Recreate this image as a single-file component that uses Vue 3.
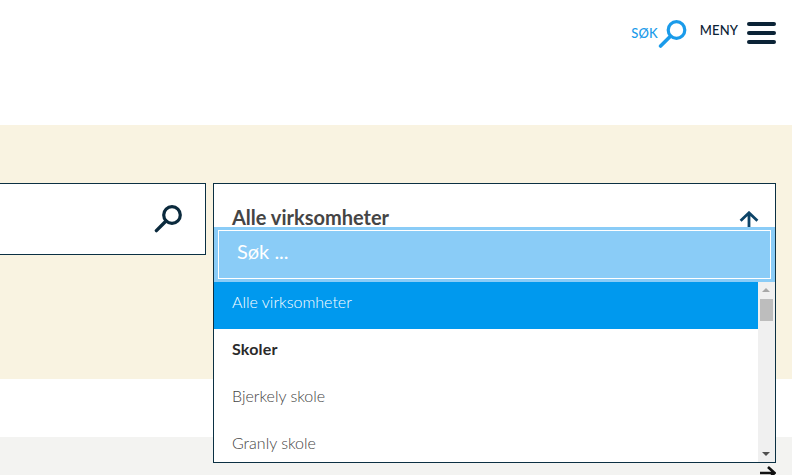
<template>
  <div class="page">
    <header class="top">
      <a class="search-link">
        <span>SØK</span>
        <svg class="search-icon" viewBox="0 0 29 28" width="29" height="28">
          <circle cx="18.5" cy="10" r="8.3" fill="none" stroke="#1a9bea" stroke-width="3.2" />
          <path d="M12.4 16.2 L2.6 26" stroke="#1a9bea" stroke-width="3.6" stroke-linecap="round" />
        </svg>
      </a>
      <a class="menu-link">
        <span>MENY</span>
        <span class="burger"><i></i><i></i><i></i></span>
      </a>
    </header>

    <section class="filters">
      <div class="text-field">
        <svg viewBox="0 0 28 28" width="28" height="28">
          <circle cx="18" cy="10" r="8.3" fill="none" stroke="#0b2a3d" stroke-width="3.2" />
          <path d="M12 16 L2.4 25.6" stroke="#0b2a3d" stroke-width="3.4" stroke-linecap="round" />
        </svg>
      </div>
      <div class="select">
        <div class="select-head">
          <span class="select-value">Alle virksomheter</span>
          <svg class="arrow-up" viewBox="0 0 20 17" width="20" height="17">
            <path d="M10 17 V2 M1.6 9.8 L10 1.8 L18.4 9.8" fill="none" stroke="#0d4468" stroke-width="2.8" />
          </svg>
        </div>
        <div class="dropdown">
          <div class="search-wrap">
            <div class="search-input">Søk ...</div>
          </div>
          <div class="list-wrap">
            <ul class="list">
              <li v-for="o in options" :key="o.label" :class="o.kind">{{ o.label }}</li>
            </ul>
            <div class="scrollbar">
              <span class="tri up"></span>
              <span class="thumb"></span>
              <span class="tri down"></span>
            </div>
          </div>
        </div>
      </div>
    </section>

    <div class="gap"></div>

    <section class="bottom">
      <svg class="arrow-right" viewBox="0 0 16 14" width="16" height="14">
        <path d="M0 7 H14 M8 1 L14.5 7 L8 13" fill="none" stroke="#111" stroke-width="2.6" />
      </svg>
    </section>
  </div>
</template>

<script setup>
const options = [
  { label: 'Alle virksomheter', kind: 'active' },
  { label: 'Skoler', kind: 'group' },
  { label: 'Bjerkely skole', kind: 'item' },
  { label: 'Granly skole', kind: 'item' },
]
</script>

<style>
html, body { margin: 0; background: #fff; overflow: hidden; }
</style>

<style scoped>
.page {
  width: 792px;
  height: 475px;
  overflow: hidden;
  font-family: Lato, "Noto Sans", sans-serif;
  background: #fff;
}
.top {
  height: 125px;
  box-sizing: border-box;
  padding: 18px 16px 0 0;
  display: flex;
  justify-content: flex-end;
  align-items: flex-start;
  gap: 13px;
}
.search-link {
  display: flex;
  align-items: center;
  gap: 0;
  color: #1a9bea;
  font-size: 13px;
  font-weight: 500;
  letter-spacing: 0.1px;
}
.search-icon { display: block; margin-top: 2px; }
.menu-link {
  display: flex;
  align-items: flex-start;
  gap: 9px;
  color: #0b2336;
  font-size: 13px;
  font-weight: 500;
  letter-spacing: 0.1px;
  line-height: 24px;
}
.burger {
  display: flex;
  flex-direction: column;
  gap: 5px;
  margin-top: 4px;
  width: 29px;
}
.burger i {
  display: block;
  height: 4px;
  border-radius: 2px;
  background: #0b2336;
}
.filters {
  height: 254px;
  box-sizing: border-box;
  background: #f9f3e1;
  padding-top: 58px;
  display: flex;
  gap: 7px;
}
.text-field {
  width: 206px;
  height: 72px;
  box-sizing: border-box;
  background: #fff;
  border: 1px solid #0b3043;
  border-left: 0;
  display: flex;
  align-items: center;
  justify-content: flex-end;
  padding: 0 23px 0 0;
}
.select {
  position: relative;
  width: 563px;
  height: 72px;
  box-sizing: border-box;
  background: #fff;
  border: 1px solid #0b3043;
}
.select-head {
  display: flex;
  justify-content: space-between;
  padding: 21px 16px 0 18px;
}
.select-value {
  font-size: 20px;
  font-weight: 700;
  line-height: 24px;
  color: #454545;
}
.arrow-up { margin-top: 6px; }
.dropdown {
  position: absolute;
  top: 43px;
  left: -1px;
  right: -1px;
  height: 236px;
  box-sizing: border-box;
  border: 1px solid #0b3043;
  border-top: 0;
  background: #fff;
  z-index: 2;
  display: flex;
  flex-direction: column;
}
.search-wrap {
  height: 55px;
  box-sizing: border-box;
  background: #8accf7;
  padding: 3px 4px;
}
.search-input {
  height: 49px;
  box-sizing: border-box;
  border: 1px solid #fff;
  padding: 0 18px;
  line-height: 40px;
  color: #fff;
  font-size: 20px;
}
.list-wrap {
  flex: 1;
  min-height: 0;
  display: flex;
}
.list {
  flex: 1;
  margin: 0;
  padding: 0;
  list-style: none;
  overflow: hidden;
}
.list li {
  height: 47px;
  line-height: 40px;
  padding-left: 18px;
  font-size: 16px;
  font-weight: 300;
  color: #444;
}
.list li.active { background: #0099ee; color: #fff; }
.list li.group { font-weight: 700; color: #2b2b2b; letter-spacing: 0.2px; }
.scrollbar {
  width: 17px;
  background: #f0f0f0;
  position: relative;
  display: flex;
  flex-direction: column;
  align-items: center;
}
.thumb {
  position: absolute;
  top: 17px;
  left: 2px;
  width: 13px;
  height: 22px;
  background: #bdbdbd;
}
.tri {
  position: absolute;
  left: 4px;
  width: 0;
  height: 0;
  border-left: 4px solid transparent;
  border-right: 4px solid transparent;
}
.tri.up { top: 6px; border-bottom: 4px solid #a8a8a8; }
.tri.down { bottom: 6px; border-top: 4px solid #505050; }
.gap { height: 58px; background: #fff; }
.bottom {
  height: 38px;
  background: #f3f3f1;
  display: flex;
  justify-content: flex-end;
  padding-right: 16px;
}
.arrow-right { margin-top: 29px; flex: none; }
</style>
